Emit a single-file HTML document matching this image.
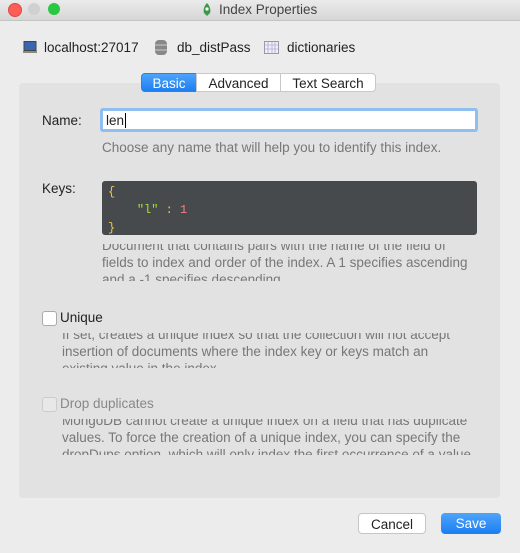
<!DOCTYPE html><html><head><style>
body{margin:0;width:520px;height:553px;background:#ececec;font-family:"Liberation Sans",sans-serif;font-size:13.5px;color:#222;position:relative;overflow:hidden}
.a{position:absolute}
.title{left:0;top:0;width:520px;height:20px;background:linear-gradient(#ebebeb,#d6d6d6);border-bottom:1px solid #c4c4c4}
.dot{width:12px;height:12px;border-radius:50%;top:3px}
.panel{left:19px;top:83px;width:481px;height:415px;background:#e2e2e2;border-radius:4px}
.help{color:#777;font-size:13.5px;line-height:17px;overflow:hidden}
.tab{top:73px;height:19px;line-height:19px;text-align:center;background:#fff;border:1px solid #c8c8c8;box-sizing:border-box}
.cb{width:13px;height:13px;border:1px solid #aaa;border-radius:3px;background:#fff}
.btn{height:21px;line-height:21px;border-radius:4px;text-align:center;font-size:13.5px}
</style></head><body>
<div class="a title"></div>
<div class="a dot" style="left:8px;background:#fc5f57;border:0.5px solid #df4744"></div>
<div class="a dot" style="left:28px;background:#d0d0d0"></div>
<div class="a dot" style="left:48px;background:#2ac741"></div>
<svg class="a" style="left:201px;top:3px" width="12" height="14"><path d="M6 0C3 3 2 7 3 10L6 13L9 10C10 7 9 3 6 0Z" fill="#3a9a4a"/><circle cx="6" cy="6" r="1.6" fill="#fff"/></svg>
<div class="a" style="left:219px;top:2px;font-size:13.5px;color:#444">Index Properties</div>
<svg class="a" style="left:23px;top:41px" width="14" height="13"><rect x="1" y="0.5" width="12" height="9" fill="#3a66b0" stroke="#444"/><rect x="0" y="10" width="14" height="2" fill="#888"/></svg>
<div class="a" style="left:44px;top:40px">localhost:27017</div>
<svg class="a" style="left:155px;top:40px" width="12" height="15"><rect x="0" y="0" width="12" height="15" rx="4" fill="#888"/><path d="M0 5h12M0 10h12" stroke="#ccc"/></svg>
<div class="a" style="left:177px;top:40px">db_distPass</div>
<svg class="a" style="left:264px;top:41px" width="15" height="13"><rect x="0.5" y="0.5" width="14" height="12" fill="#eef" stroke="#99a"/><path d="M0 4h15M0 8h15M4 0v13M8 0v13M11 0v13" stroke="#99a" stroke-width=".6"/></svg>
<div class="a" style="left:287px;top:40px">dictionaries</div>
<div class="a panel"></div>
<div class="a tab" style="left:141px;width:56px;background:linear-gradient(#4ea4f9,#1b7ef3);color:#fff;border-color:#2b82ee;border-radius:4px 0 0 4px">Basic</div>
<div class="a tab" style="left:196px;width:85px">Advanced</div>
<div class="a tab" style="left:280px;width:96px;border-radius:0 4px 4px 0">Text Search</div>
<div class="a" style="left:42px;top:113px">Name:</div>
<div class="a" style="left:100px;top:108px;width:378px;height:24px;border:3px solid #8fbef0;box-sizing:border-box;border-radius:3px;background:#fff;padding:2px 0 0 3px">len<span style="border-left:1px solid #000;margin-left:1px"></span></div>
<div class="a help" style="left:102px;top:139px">Choose any name that will help you to identify this index.</div>
<div class="a" style="left:42px;top:181px">Keys:</div>
<div class="a" style="left:102px;top:181px;width:375px;height:54px;background:#474a4d;border-radius:3px;font-family:'Liberation Mono',monospace;font-size:12px;line-height:18px;padding-left:6px;box-sizing:border-box;padding-top:2px;color:#f5c542;white-space:pre">{
    <span style="color:#a6e22e">"l"</span> : <span style="color:#f08080">1</span>
}</div>
<div class="a help" style="left:102px;top:244px;width:375px;height:37px"><div style="margin-top:-7px">Document that contains pairs with the name of the field of fields to index and order of the index. A 1 specifies ascending and a -1 specifies descending.</div></div>
<div class="a cb" style="left:42px;top:311px"></div>
<div class="a" style="left:60px;top:310px">Unique</div>
<div class="a help" style="left:62px;top:333px;width:405px;height:35px"><div style="margin-top:-7.5px">If set, creates a unique index so that the collection will not accept insertion of documents where the index key or keys match an existing value in the index.</div></div>
<div class="a cb" style="left:42px;top:397px;border-color:#ccc;background:#e8e8e8"></div>
<div class="a" style="left:60px;top:396px;color:#888">Drop duplicates</div>
<div class="a help" style="left:62px;top:419px;width:420px;height:36px"><div style="margin-top:-7.5px">MongoDB cannot create a unique index on a field that has duplicate values. To force the creation of a unique index, you can specify the dropDups option, which will only index the first occurrence of a value.</div></div>
<div class="a btn" style="left:358px;top:513px;width:68px;background:#fff;border:1px solid #c6c6c6;box-sizing:border-box">Cancel</div>
<div class="a btn" style="left:441px;top:513px;width:60px;background:linear-gradient(#4ea4f9,#1b7ef3);color:#fff">Save</div>
</body></html>
